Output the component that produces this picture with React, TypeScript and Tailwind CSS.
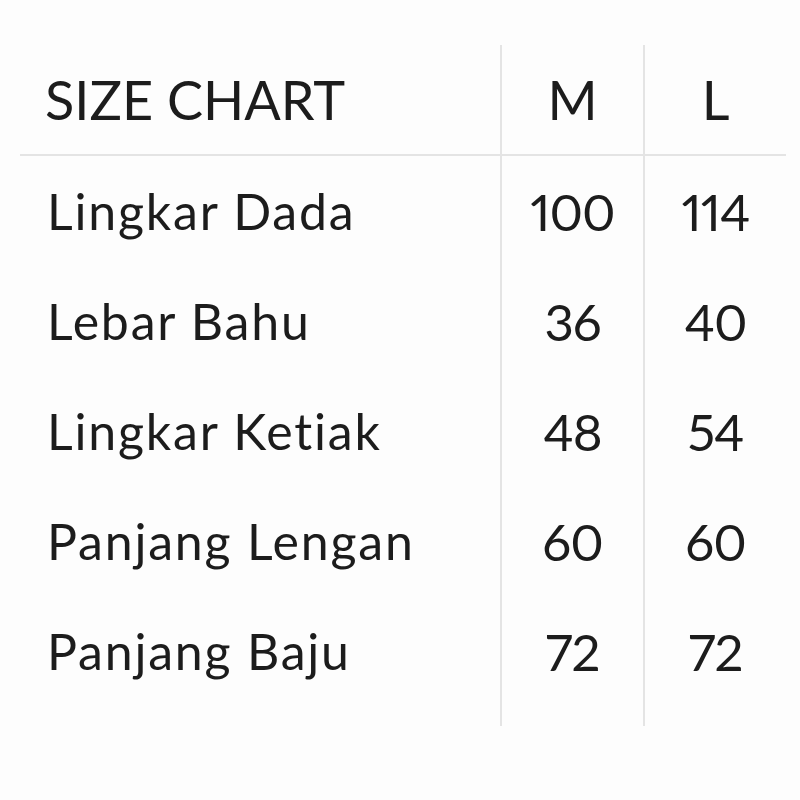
const rows: [string, string, string][] = [
  ["Lingkar Dada", "100", "114"],
  ["Lebar Bahu", "36", "40"],
  ["Lingkar Ketiak", "48", "54"],
  ["Panjang Lengan", "60", "60"],
  ["Panjang Baju", "72", "72"],
];

// shared column template: label column + two size columns
const grid = "grid grid-cols-[480px_143px_143px]";
const sizeCell = "flex items-center justify-center border-l-2 border-[#e4e4e4]";
const numText = "text-[51px] leading-none tracking-[-1px] proportional-nums";

export default function App() {
  return (
    <div className="min-h-[800px] w-[800px] bg-[#fdfdfd] pl-5 pt-[45px] font-['Lato','Open_Sans',sans-serif] text-[#1c1c1c]">
      <div className="w-[766px]">
        {/* header */}
        <div className={`${grid} h-[111px] border-b-2 border-[#e4e4e4]`}>
          <div className="flex items-center pl-[25px] text-[54px] leading-none">SIZE CHART</div>
          <div className={`${sizeCell} text-[54px] leading-none`}>M</div>
          <div className={`${sizeCell} text-[54px] leading-none`}>L</div>
        </div>

        {rows.map(([label, m, l]) => (
          <div key={label} className={`${grid} h-[110px]`}>
            <div className="flex items-center pl-[27px] text-[50px] leading-none tracking-[1.8px]">
              {label}
            </div>
            <div className={`${sizeCell} ${numText}`}>{m}</div>
            <div className={`${sizeCell} ${numText}`}>{l}</div>
          </div>
        ))}

        {/* dividers run a little past the last row */}
        <div className={`${grid} h-[20px]`}>
          <div />
          <div className="border-l-2 border-[#e4e4e4]" />
          <div className="border-l-2 border-[#e4e4e4]" />
        </div>
      </div>
    </div>
  );
}
